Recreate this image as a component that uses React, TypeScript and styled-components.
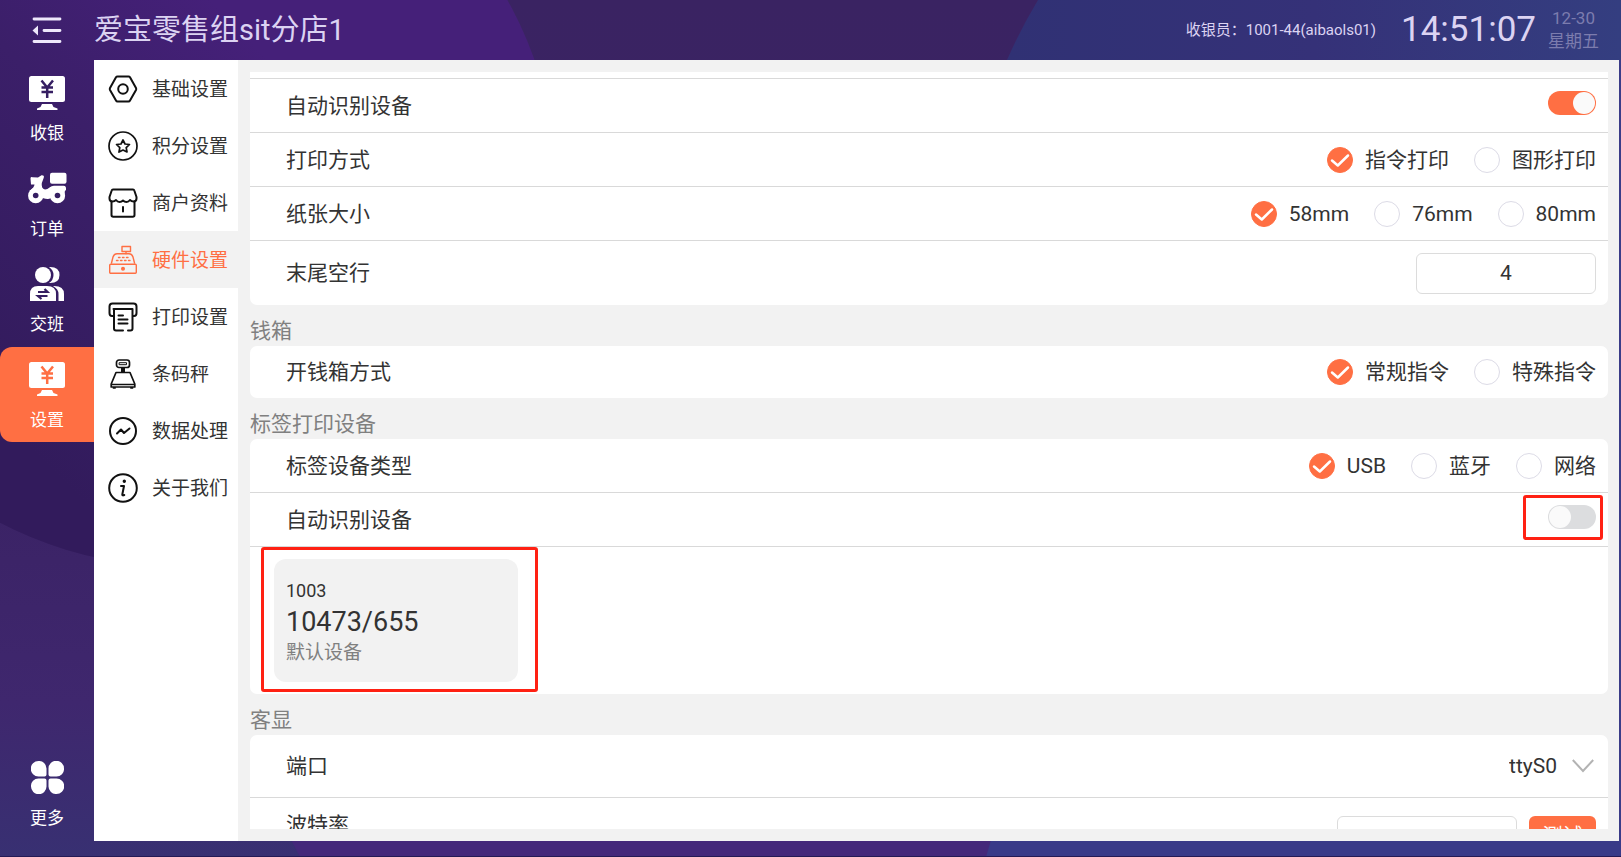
import React, { useId } from 'react';
import styled, { createGlobalStyle, css } from 'styled-components';

const ORANGE = '#ff6f43';
const NIGHT = '#351e62';

const GlobalStyle = createGlobalStyle`
  * { box-sizing: border-box; }
  body {
    margin: 0;
    font-family: Roboto, "Noto Sans CJK SC", sans-serif;
    color: #333;
  }
  button, input, select { font: inherit; color: inherit; }
`;

/* ---------- page frame ---------- */

const Shell = styled.div`
  position: relative;
  isolation: isolate;
  display: grid;
  grid-template-columns: 94px minmax(0, 1fr);
  grid-template-rows: 60px minmax(0, 1fr);
  height: 100vh;
  padding: 0 2px 16px 0;
  overflow: hidden;
`;

const Backdrop = styled.svg`
  position: absolute;
  inset: 0;
  z-index: -1;
  width: 100%;
  height: 100%;
`;

const Header = styled.header`
  grid-column: 1 / -1;
  display: flex;
  align-items: center;
  color: #dcd3f2;
`;

const MenuButton = styled.button`
  display: grid;
  place-items: center;
  width: 94px;
  height: 60px;
  padding: 0;
  border: 0;
  background: none;
`;

const StoreName = styled.h1`
  flex: 1;
  margin: 0;
  font-size: 29px;
  font-weight: 400;
  line-height: 58px;
`;

const Cashier = styled.span`
  font-size: 15px;
  line-height: 24px;
`;

const Clock = styled.time`
  margin-left: 25px;
  font-size: 35px;
  line-height: 44px;
`;

const DateBlock = styled.div`
  display: flex;
  flex-direction: column;
  align-items: center;
  margin: 0 20px 0 12px;
  font-size: 17px;
  line-height: 23px;
  color: #7c7cae;
`;

/* ---------- main navigation ---------- */

const SideNav = styled.nav`
  display: flex;
  flex-direction: column;
  justify-content: space-between;
`;

const SideGroup = styled.div`
  display: flex;
  flex-direction: column;
  height: 382px;
`;

const SideItem = styled.button<{ $active?: boolean; $pinned?: boolean }>`
  flex: ${p => (p.$pinned ? 'none' : '1')};
  display: flex;
  flex-direction: column;
  align-items: center;
  gap: 11px;
  width: 100%;
  height: 96px;
  padding: 15px 0 0;
  border: 0;
  border-radius: 12px 0 0 12px;
  background: ${p => (p.$active ? ORANGE : 'none')};
  color: #fff;
  font-size: 17px;
  line-height: 24px;
`;

const IconSlot = styled.span`
  display: grid;
  place-items: center;
  height: 35px;
`;

/* ---------- settings menu ---------- */

const Main = styled.main`
  display: flex;
  min-width: 0;
  background: #f2f2f2;
`;

const SettingsNav = styled.nav`
  flex: 0 0 144px;
  background: #fff;
`;

const SettingsLink = styled.a<{ $active?: boolean }>`
  display: flex;
  align-items: center;
  gap: 14px;
  height: 57px;
  padding-left: 14px;
  background: ${p => (p.$active ? '#f2f2f2' : 'transparent')};
  color: ${p => (p.$active ? ORANGE : '#333')};
  font-size: 19px;
  line-height: 28px;
  text-decoration: none;
  white-space: nowrap;

  svg {
    flex: none;
    color: ${p => (p.$active ? ORANGE : '#111')};
  }
  span { padding-top: 2px; }
`;

/* ---------- settings content ---------- */

const Content = styled.div`
  flex: 1;
  min-width: 0;
  margin: 12px 11px 12px 12px;
  overflow-y: auto;
  scrollbar-width: none;
`;

const SectionTitle = styled.h2`
  margin: 0;
  height: 41px;
  padding-top: 12px;
  font-size: 21px;
  font-weight: 400;
  line-height: 29px;
  color: #808080;
`;

const Card = styled.section<{ $continued?: boolean }>`
  overflow: hidden;
  border-radius: ${p => (p.$continued ? '0 0 7px 7px' : '7px')};
  background: #fff;
`;

const rowHeights = { sliver: 7, base: 54, single: 52, select: 63, input: 64, action: 76 };

const Row = styled.div<{ $kind?: keyof typeof rowHeights }>`
  display: flex;
  align-items: center;
  justify-content: space-between;
  height: ${p => rowHeights[p.$kind ?? 'base']}px;
  padding: 0 12px 0 36px;
  font-size: 21px;
  line-height: 30px;

  &:not(:last-child) { border-bottom: 1px solid #d9d9d9; }

  ${p =>
    p.$kind === 'action' &&
    css`
      & > label { align-self: flex-start; line-height: 54px; }
    `}
`;

const Options = styled.div`
  display: flex;
  gap: 25px;
`;

const Option = styled.label`
  display: flex;
  align-items: center;
  gap: 12px;
`;

const RadioBox = styled.span`
  position: relative;
  display: block;
  width: 26px;
  height: 26px;

  input {
    appearance: none;
    display: block;
    width: 26px;
    height: 26px;
    margin: 0;
    border: 1px solid #dcdbe6;
    border-radius: 50%;
    background: #fff;
  }
  input:checked { border-color: ${ORANGE}; background: ${ORANGE}; }
  svg {
    position: absolute;
    inset: 0;
    opacity: 0;
    pointer-events: none;
  }
  input:checked + svg { opacity: 1; }
`;

const highlight = (inset: string) => css`
  &::after {
    content: '';
    position: absolute;
    inset: ${inset};
    border: 3px solid #ff2113;
    border-radius: 3px;
    pointer-events: none;
  }
`;

const SwitchBox = styled.span<{ $marked?: boolean }>`
  position: relative;
  display: block;
  height: 24px;
  margin-bottom: 6px;
  ${p => p.$marked && highlight('-10px -7px -11px -25px')}
`;

const SwitchInput = styled.input`
  appearance: none;
  display: flex;
  width: 48px;
  height: 24px;
  margin: 0;
  padding: 1px;
  border-radius: 12px;
  background: #dcdddf;

  &::before {
    content: '';
    width: 22px;
    height: 22px;
    border-radius: 50%;
    background: #fafafa;
  }
  &:checked { justify-content: flex-end; background: ${ORANGE}; }
`;

const NumberBox = styled.input`
  width: 180px;
  height: 41px;
  padding: 0;
  border: 1px solid #dcdcdc;
  border-radius: 6px;
  background: #fff;
  text-align: center;
`;

const Actions = styled.div`
  display: flex;
  gap: 12px;
`;

const ActionButton = styled.button`
  width: 67px;
  height: 41px;
  padding: 0;
  border: 0;
  border-radius: 6px;
  background: ${ORANGE};
  color: #fff;
  font-size: 20px;
`;

const SelectBox = styled.span`
  position: relative;
  display: block;

  select {
    appearance: none;
    display: block;
    padding: 0 39px 0 0;
    border: 0;
    background: none;
    line-height: 30px;
    text-align: right;
  }
  svg {
    position: absolute;
    right: 2px;
    top: 8px;
    pointer-events: none;
  }
`;

const DevicePanel = styled.div`
  display: flex;
  height: 147px;
  padding: 12px 24px;
`;

const DeviceCard = styled.button`
  position: relative;
  display: flex;
  flex-direction: column;
  align-items: flex-start;
  justify-content: center;
  width: 244px;
  padding: 2px 12px 0;
  border: 0;
  border-radius: 12px;
  background: #f2f2f2;
  text-align: left;
  ${highlight('-12px -20px -10px -13px')}
`;

const DeviceCode = styled.span`
  font-size: 18px;
  line-height: 28px;
`;

const DeviceName = styled.strong`
  font-size: 27px;
  font-weight: 400;
  line-height: 34px;
`;

const DeviceNote = styled.span`
  font-size: 19px;
  line-height: 28px;
  color: #808080;
`;

/* ---------- drawings ---------- */

const BackdropArt = () => (
  <Backdrop viewBox="0 0 1621 857" preserveAspectRatio="none" aria-hidden="true">
    <defs>
      <linearGradient id="base" x1="0" y1="0" x2="0" y2="1">
        <stop offset="0" stopColor="#3a2362" />
        <stop offset="0.6" stopColor="#3b2366" />
        <stop offset="0.82" stopColor="#3f276e" />
        <stop offset="1" stopColor="#383072" />
      </linearGradient>
      <linearGradient id="orb" gradientUnits="userSpaceOnUse" x1="0" y1="420" x2="420" y2="0">
        <stop offset="0" stopColor="#321b5c" />
        <stop offset="0.45" stopColor="#3b1f69" />
        <stop offset="0.75" stopColor="#452079" />
      </linearGradient>
      <linearGradient id="sea" x1="0" y1="0" x2="1" y2="0">
        <stop offset="0" stopColor="#303174" />
        <stop offset="0.5" stopColor="#353178" />
        <stop offset="1" stopColor="#343e80" />
      </linearGradient>
    </defs>
    <rect width="1621" height="857" fill="url(#base)" />
    <circle cx="176" cy="186" r="380" fill="url(#orb)" />
    <path d="M1038 0Q1020 30 1007 60L1007 300H1621V0Z" fill="url(#sea)" />
    <path d="M1600 60H1621V857H1600Z" fill="#3a3c88" />
    <path d="M286 830L300 857H1000V830Z" fill="#44287a" />
    <path d="M994 830L986 857H1621V830Z" fill="#393a88" />
    <rect y="856" width="1621" height="1" fill="#241a55" />
  </Backdrop>
);

const CollapseIcon = () => (
  <svg width="30" height="27" viewBox="0 0 30 27" fill="none" stroke="#eee8fb" strokeWidth="2.8" strokeLinecap="round" aria-hidden="true">
    <path d="M2 2H28M12 13.500H28M2 24.500H28" />
    <path d="M0.500 13.500L6 8.500V18.500Z" fill="#eee8fb" stroke="none" />
  </svg>
);

const RegisterIcon = ({ ink }: { ink: string }) => (
  <svg width="36" height="34" viewBox="0 0 36 34" aria-hidden="true">
    <rect width="36" height="26" rx="2.500" fill="#fff" />
    <path d="M13 28H23L24.500 31L28.500 32.500V34H8V32.500L11.500 31Z" fill="#fff" />
    <path d="M12.500 4.500L18.200 11.500L24 4.500M18.200 11.500V22M12.500 11.500H24M12.500 16H24" fill="none" stroke={ink} strokeWidth="2.5" />
  </svg>
);

const ScooterIcon = () => (
  <svg width="39" height="32" viewBox="0 0 39 32" fill="#fff" aria-hidden="true">
    <rect x="22" y="0.700" width="16.500" height="11" rx="2" />
    <path d="M2.500 6.500Q2.500 4.800 4.500 5.200L10 5.500L13.500 3.200Q17 3 15.500 6.500L13.800 11Q13 16.500 17 17.500Q19.500 17.500 21.500 15.500Q23.500 13.800 26 13.800H35.500Q38.500 13.800 38 17.800Q36.500 19 36.500 21L34 26H22.500Q21 28 14.500 26L5 25L1.500 19Q6.500 15 6.500 12.500H3Z" />
    <circle cx="7.700" cy="23.700" r="7.600" />
    <circle cx="29.500" cy="23.700" r="7.600" />
    <circle cx="7.700" cy="23.500" r="2.800" fill={NIGHT} />
    <circle cx="29.500" cy="23.500" r="2.800" fill={NIGHT} />
  </svg>
);

const ShiftIcon = () => (
  <svg width="34" height="35" viewBox="0 0 34 35" fill="#fff" aria-hidden="true">
    <circle cx="13" cy="9" r="8" />
    <path d="M19 1Q29.500 0.500 29.500 9Q29.500 17.500 19 17Q23.500 14 23.500 9Q23.500 4 19 1Z" />
    <path d="M0 35V28Q0 20 8 20H17Q26 20 26 28V35Z" />
    <path d="M23 20Q34 19.500 34 28V35H28.500V28Q28.500 23 23 20Z" />
    <path d="M8 26H17.500L14.500 23M17.500 30H8L11.500 33" fill="none" stroke={NIGHT} strokeWidth="2.2" />
  </svg>
);

const petal = 'M7.500 0A7.500 7.500 0 0 1 15.500 7.500V13.500Q15.500 15.500 13.500 15.500H7.500A7.750 7.750 0 0 1 7.500 0Z';

const MoreIcon = () => (
  <svg width="33" height="33" viewBox="0 0 33 33" fill="#fff" aria-hidden="true">
    <path d={petal} />
    <path d={petal} transform="translate(33 0) rotate(90)" />
    <path d={petal} transform="translate(33 33) rotate(180)" />
    <path d={petal} transform="translate(0 33) rotate(270)" />
  </svg>
);

const LineIcon = ({ children, weight = 2 }: { children: React.ReactNode; weight?: number }) => (
  <svg width="30" height="30" viewBox="0 0 30 30" fill="none" stroke="currentColor" strokeWidth={weight} strokeLinejoin="round" strokeLinecap="round" aria-hidden="true">
    {children}
  </svg>
);

const HexIcon = () => (
  <LineIcon>
    <path d="M9.500 2.500H20.500Q21.500 2.500 22 3.300L28 14Q28.500 15 28 16L22 26.500Q21.500 27.500 20.500 27.500H9.500Q8.500 27.500 8 26.500L2 16Q1.500 15 2 14L8 3.300Q8.500 2.500 9.500 2.500Z" />
    <circle cx="15" cy="15" r="4.800" />
  </LineIcon>
);

const StarIcon = () => (
  <LineIcon weight={1.7}>
    <circle cx="15" cy="15" r="14" />
    <path d="M15 9L17 13L21.500 13.500L18.200 16.600L19 21L15 19L11 21L11.800 16.600L8.500 13.500L13 13Z" />
  </LineIcon>
);

const ShopIcon = () => (
  <LineIcon>
    <path d="M5 1.500H25Q26 1.500 26.300 2.500L28.500 9V10.500Q28.500 13.500 25.500 13.500Q23.500 13.500 22 12Q20.500 14 18.500 14Q16.500 14 15 12.500Q13.500 14 11.500 14Q9.500 14 8 12Q6.500 13.500 4.500 13.500Q1.500 13.500 1.500 10.500V9L3.700 2.500Q4 1.500 5 1.500Z" />
    <path d="M3.500 13.500V27Q3.500 28.700 5.200 28.700H24.800Q26.500 28.700 26.500 27V13.500M15 19V23.500" />
  </LineIcon>
);

const HardwareIcon = () => (
  <LineIcon weight={1.4}>
    <path d="M14 1.500H22.500V6.500H14ZM18 6.500V9M3.500 18L5 12Q6 8.700 9 8.700H21Q24 8.700 25 12L26.500 18" />
    <rect x="1.700" y="19.300" width="26.600" height="9" rx="1" />
    <circle cx="15" cy="23.800" r="1.300" fill="currentColor" />
    <path d="M10.500 12.500H12M14.500 12.500H16M18.500 12.500H20M8.500 15.500H10M12.500 15.500H14M16.500 15.500H18M20.500 15.500H22" />
  </LineIcon>
);

const PrinterIcon = () => (
  <LineIcon>
    <path d="M5 14H4Q1.500 14 1.500 11V4.500Q1.500 1.500 4.500 1.500H25.500Q28.500 1.500 28.500 4.500V11Q28.500 14 26 14H25.500" />
    <path d="M5.500 7H24.500M6 7V26.500Q6 28.500 8 28.500H15M20 28.500H22.500Q24.500 28.500 24.500 26.500V7M10.500 13.500H15M10.500 17.500H19.500M10.500 21.500H19.500" />
  </LineIcon>
);

const ScaleIcon = () => (
  <LineIcon weight={1.7}>
    <rect x="8.500" y="1" width="13" height="7.500" rx="2.500" />
    <rect x="11.500" y="3.700" width="7" height="2" strokeWidth="1" />
    <path d="M15 9V13" strokeWidth="4" strokeLinecap="butt" />
    <path d="M8 13.500H22L26.800 25V28H3.200V25ZM3.500 25.500H26.500M5.500 29H7M23 29H24.500" />
  </LineIcon>
);

const TrendIcon = () => (
  <LineIcon>
    <circle cx="15" cy="15" r="13" />
    <path d="M9 17.500L13 13.500L16 17L21.500 12.500" />
  </LineIcon>
);

const InfoIcon = () => (
  <LineIcon>
    <circle cx="15" cy="15" r="13.800" />
    <circle cx="16.300" cy="8.300" r="1" fill="currentColor" strokeWidth="1.400" />
    <path d="M13 13H16L14.300 21.500Q14.200 23 16.300 22" />
  </LineIcon>
);

const CheckMark = () => (
  <svg width="26" height="26" viewBox="0 0 26 26" fill="none" stroke="#fff" strokeWidth="2.500" strokeLinecap="round" strokeLinejoin="round" aria-hidden="true">
    <path d="M5 13.500L10.800 18.500L21 8.500" />
  </svg>
);

const ChevronDown = () => (
  <svg width="22" height="14" viewBox="0 0 22 14" fill="none" stroke="#b3b3b3" strokeWidth="2" aria-hidden="true">
    <path d="M0.800 1L11 12L21.200 1" />
  </svg>
);

/* ---------- controls ---------- */

const RadioRow = ({ label, options, kind }: { label: string; options: string[]; kind?: keyof typeof rowHeights }) => {
  const id = useId();
  return (
    <Row $kind={kind} role="radiogroup" aria-labelledby={id}>
      <span id={id}>{label}</span>
      <Options>
        {options.map((text, i) => (
          <Option key={text}>
            <RadioBox>
              <input type="radio" name={id} defaultChecked={i === 0} />
              <CheckMark />
            </RadioBox>
            {text}
          </Option>
        ))}
      </Options>
    </Row>
  );
};

const SwitchRow = ({ label, on, marked }: { label: string; on?: boolean; marked?: boolean }) => {
  const id = useId();
  return (
    <Row>
      <label htmlFor={id}>{label}</label>
      <SwitchBox $marked={marked}>
        <SwitchInput id={id} type="checkbox" role="switch" defaultChecked={on} />
      </SwitchBox>
    </Row>
  );
};

const settings = [
  { label: '基础设置', Icon: HexIcon },
  { label: '积分设置', Icon: StarIcon },
  { label: '商户资料', Icon: ShopIcon },
  { label: '硬件设置', Icon: HardwareIcon, active: true },
  { label: '打印设置', Icon: PrinterIcon },
  { label: '条码秤', Icon: ScaleIcon },
  { label: '数据处理', Icon: TrendIcon },
  { label: '关于我们', Icon: InfoIcon },
];

export default function App() {
  return (
    <Shell>
      <GlobalStyle />
      <BackdropArt />
      <Header>
        <MenuButton aria-label="收起菜单"><CollapseIcon /></MenuButton>
        <StoreName>爱宝零售组sit分店1</StoreName>
        <Cashier>收银员：1001-44(aibaols01)</Cashier>
        <Clock>14:51:07</Clock>
        <DateBlock>
          <span>12-30</span>
          <span>星期五</span>
        </DateBlock>
      </Header>

      <SideNav>
        <SideGroup>
          <SideItem><IconSlot><RegisterIcon ink={NIGHT} /></IconSlot>收银</SideItem>
          <SideItem><IconSlot><ScooterIcon /></IconSlot>订单</SideItem>
          <SideItem><IconSlot><ShiftIcon /></IconSlot>交班</SideItem>
          <SideItem $active><IconSlot><RegisterIcon ink={ORANGE} /></IconSlot>设置</SideItem>
        </SideGroup>
        <SideItem $pinned><IconSlot><MoreIcon /></IconSlot>更多</SideItem>
      </SideNav>

      <Main>
        <SettingsNav>
          {settings.map(({ label, Icon, active }) => (
            <SettingsLink key={label} href="#" $active={active}>
              <Icon />
              <span>{label}</span>
            </SettingsLink>
          ))}
        </SettingsNav>

        <Content>
          <Card $continued>
            <Row $kind="sliver" />
            <SwitchRow label="自动识别设备" on />
            <RadioRow label="打印方式" options={['指令打印', '图形打印']} />
            <RadioRow label="纸张大小" options={['58mm', '76mm', '80mm']} />
            <Row $kind="input">
              <label htmlFor="blank-lines">末尾空行</label>
              <NumberBox id="blank-lines" inputMode="numeric" defaultValue="4" />
            </Row>
          </Card>

          <SectionTitle>钱箱</SectionTitle>
          <Card>
            <RadioRow kind="single" label="开钱箱方式" options={['常规指令', '特殊指令']} />
          </Card>

          <SectionTitle>标签打印设备</SectionTitle>
          <Card>
            <RadioRow label="标签设备类型" options={['USB', '蓝牙', '网络']} />
            <SwitchRow label="自动识别设备" marked />
            <DevicePanel>
              <DeviceCard>
                <DeviceCode>1003</DeviceCode>
                <DeviceName>10473/655</DeviceName>
                <DeviceNote>默认设备</DeviceNote>
              </DeviceCard>
            </DevicePanel>
          </Card>

          <SectionTitle>客显</SectionTitle>
          <Card>
            <Row $kind="select">
              <label htmlFor="port">端口</label>
              <SelectBox>
                <select id="port" defaultValue="ttyS0">
                  <option>ttyS0</option>
                </select>
                <ChevronDown />
              </SelectBox>
            </Row>
            <Row $kind="action">
              <label htmlFor="baud">波特率</label>
              <Actions>
                <NumberBox id="baud" inputMode="numeric" />
                <ActionButton>测试</ActionButton>
              </Actions>
            </Row>
          </Card>
        </Content>
      </Main>
    </Shell>
  );
}
